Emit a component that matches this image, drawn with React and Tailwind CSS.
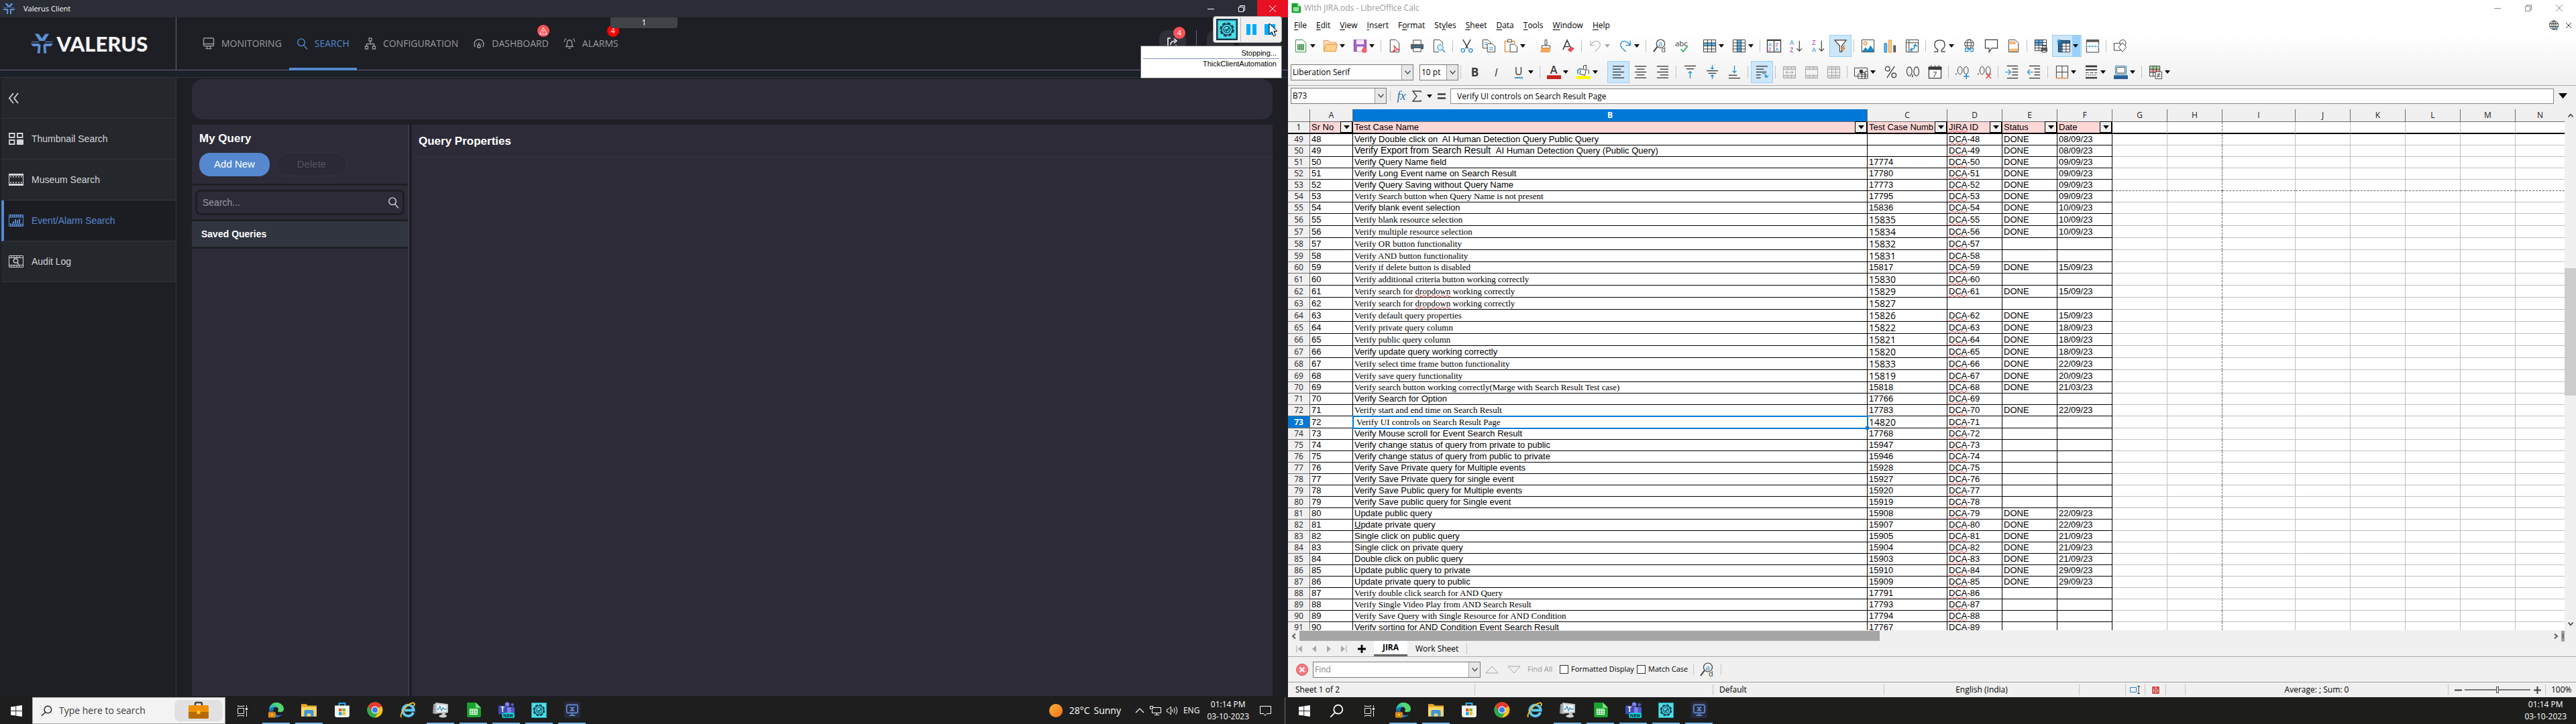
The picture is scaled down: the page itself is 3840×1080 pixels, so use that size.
import React from "react";

const UI = "font-['Open_Sans','Noto_Sans',sans-serif]";
const SANS = "font-['Liberation_Sans',sans-serif]";

/* ---------- shared pieces ---------- */

function Svg({ w = 22, h = w, vb = "0 0 22 22", className = "", children }) {
  return (
    <svg width={w} height={h} viewBox={vb} fill="none" className={"shrink-0 overflow-visible " + className} aria-hidden="true">
      {children}
    </svg>
  );
}

function ValerusMark({ w, h, color = "#5b8fd6" }) {
  return (
    <Svg w={w} h={h} vb="0 0 34 30">
      <g fill={color}>
        <path d="M6 0h6l5 7 5-7h6l-7 11h-8z" />
        <path d="M10 30h4l1-13-3-2H0l3 4h8z" />
        <path d="M24 30h-4l-1-13 3-2h12l-3 4h-8z" />
        <path d="M0 12h12l1 1H2zM34 12H22l-1 1h11z" />
      </g>
    </Svg>
  );
}

function Magnifier({ size = 18, color = "currentColor", flip = false, sw = 1.5 }) {
  return (
    <Svg w={size} vb="0 0 18 18">
      <g stroke={color} strokeWidth={sw} strokeLinecap="round">
        {flip ? (
          <>
            <circle cx="11" cy="7" r="5.6" />
            <path d="M7 11 1.5 16.5" />
          </>
        ) : (
          <>
            <circle cx="7.5" cy="6.5" r="5.6" />
            <path d="M11.3 11 16.5 17" />
          </>
        )}
      </g>
    </Svg>
  );
}

function WindowButtons({ stroke, closeClass, className, item }) {
  return (
    <div className={"flex " + className}>
      <button aria-label="Minimise" className={"flex w-[46px] items-center justify-center " + item}>
        <Svg w={10} vb="0 0 10 10"><path d="M0 5.5h10" stroke={stroke} /></Svg>
      </button>
      <button aria-label="Restore" className={"flex w-[46px] items-center justify-center " + item}>
        <Svg w={10} vb="0 0 10 10"><path d="M.5 2.5h7v7h-7zM2.5 2.500v-2h7v7h-2" stroke={stroke} /></Svg>
      </button>
      <button aria-label="Close" className={"flex w-[46px] items-center justify-center " + item + " " + closeClass}>
        <Svg w={10} vb="0 0 10 10"><path d="m0 0 10 10M10 0 0 10" stroke={stroke} /></Svg>
      </button>
    </div>
  );
}

/* ---------- taskbar ---------- */

const GearCheck = ({ size = 22 }) => (
  <Svg w={size}>
    <rect x=".5" y=".5" width="21" height="21" fill="#4fe0e8" stroke="#2a9fa8" />
    <circle cx="11" cy="11" r="7.500" stroke="#12435a" strokeWidth="2" strokeDasharray="4 1.900" />
    <circle cx="11" cy="11" r="6.300" stroke="#12435a" strokeWidth="1.200" />
    <circle cx="11" cy="11" r="3.800" stroke="#12435a" strokeWidth="1" />
    <path d="m9 11 1.600 1.700L14 8.500" stroke="#12435a" strokeWidth="1.500" />
  </Svg>
);

const Briefcase = ({ w, h }) => (
  <Svg w={w} h={h} vb="0 0 30 26">
    <path d="M10 6V3q0-2 2-2h6q2 0 2 2v3" stroke="#45413c" strokeWidth="2.500" />
    <rect y="5" width="30" height="20" rx="2" fill="#f29100" />
    <path d="M0 15h30v8q0 2-2 2H2q-2 0-2-2z" fill="#b86a08" />
    <rect x="12.500" y="13" width="5" height="5" rx="1" fill="#ffd21f" />
  </Svg>
);

const EdgeIcon = () => (
  <Svg w={24}>
    <path d="M1 12C1 5 5.500 1 11 1s10 4 10 8.500c0 3-2 4.500-4.500 4.500-2 0-3.500-.7-3.500-1.600 0-.6.8-.9.8-2.300C13.800 8.500 12 7 9.500 7 5 7 1 9 1 12z" fill="#35c1b1" />
    <path d="M11 1c5.500 0 10 4 10 8.500 0 3-2 4.500-4.500 4.500-2 0-3.500-.7-3.500-1.600 0-.6.8-.9.800-2.300C13.800 6 9 4 5 3.500 6.700 1.900 8.800 1 11 1z" fill="#52d66a" />
    <path d="M1 12c0-3 4-5 8.500-5C7 8 6.500 11 7.500 14c1.200 3.500 6 5.500 11 3.500-1.500 2.300-4 3.500-7.500 3.500C5 21 1 17 1 12z" fill="#1677c9" />
    <rect x="0" y="14" width="10" height="7.500" rx="1" fill="#e08a12" />
    <path d="M3 14v-1.500h4V14" stroke="#5b3a10" />
    <rect x="4" y="16.500" width="2" height="2" fill="#ffe066" />
  </Svg>
);
const FolderIcon = () => (
  <Svg w={24}>
    <path d="M0 3h7l2 2h12v13H0z" fill="#e8a91c" />
    <path d="M0 7h21v13H0z" fill="#ffd666" />
    <path d="M4 20v-7q0-2 2-2h9q2 0 2 2v7h-4v-4H8v4z" fill="#3d96d8" />
  </Svg>
);
const StoreIcon = () => (
  <Svg w={24}>
    <path d="M7 6V2h8v4" stroke="#28a8ea" strokeWidth="2" />
    <path d="M1 5h20v13q0 3-3 3H4q-3 0-3-3z" fill="#f4f4f4" />
    <path d="M6.500 9h4v4h-4z" fill="#f25022" />
    <path d="M11.500 9h4v4h-4z" fill="#7fba00" />
    <path d="M6.500 14h4v4h-4z" fill="#00a4ef" />
    <path d="M11.500 14h4v4h-4z" fill="#ffb900" />
  </Svg>
);
const ChromeIcon = () => (
  <Svg w={24}>
    <circle cx="11" cy="11" r="10.500" fill="#fbc116" />
    <path d="M11 11 1.900 5.700A10.500 10.500 0 0 1 20.100 5.700z" fill="#e33b2e" />
    <path d="M11 11 1.900 5.700A10.500 10.500 0 0 0 11 21.500l4.500-8z" fill="#2da94f" />
    <path d="M11 6h9.200A10.500 10.500 0 0 0 2 5.800L6.500 13z" fill="#e33b2e" />
    <circle cx="11" cy="11" r="5" fill="#fff" />
    <circle cx="11" cy="11" r="4" fill="#3b7ded" />
  </Svg>
);
const IeIcon = () => (
  <Svg w={24}>
    <path d="M18.500 14.500A7.500 7.500 0 1 1 19 11.500H6.500" stroke="#5cc8f2" strokeWidth="3.600" />
    <path d="M2 21C-1 17 10 3 17 1.500c4-.8 3.500 2.500 2 4.500" stroke="#f5c518" strokeWidth="1.700" />
  </Svg>
);
const MonitorIcon = () => (
  <Svg w={24}>
    <path d="m1 3 4-1v15l-5-1.500z" fill="#9a9ea2" />
    <path d="M13 14h4l1 5h-6z" fill="#b5b8ba" />
    <ellipse cx="14" cy="19.500" rx="5.500" ry="2" fill="#cfd1d2" />
    <path d="m4 1 17 2v12L4 16z" fill="#c9ccce" />
    <path d="m6 3.500 13 1.300v8.500L6 13.800z" fill="#eaf5fc" />
    <path d="M6 10h2l2-4 2 6 2-4 1.500 2H19" stroke="#2b7fb8" />
  </Svg>
);
const CalcIcon = ({ size = 24 }) => (
  <Svg w={size}>
    <path d="M2 1h12l7 7v11q0 2-2 2H4q-2 0-2-2z" fill="#18a42e" />
    <path d="M14 1v7h7z" fill="#8be28f" />
    <path d="M6 10h10v7H6zM6 12.300h10M6 14.700h10M9.300 10v7M12.700 10v7" stroke="#eafbe9" strokeWidth="1.100" />
  </Svg>
);
const TeamsIcon = () => (
  <Svg w={24}>
    <circle cx="12" cy="3.500" r="3" fill="#7b83eb" />
    <circle cx="19" cy="4" r="2.200" fill="#5059c9" />
    <path d="M13 7h9v7q0 3-4 3h-5z" fill="#5059c9" />
    <path d="M6 7h11v8q0 5-5 5T6 15z" fill="#7b83eb" />
    <rect x="0" y="5" width="12" height="12" rx="1" fill="#4048b5" />
    <text x="3" y="14" fontSize="9" fontWeight="700" fill="#fff" fontFamily="Open Sans, sans-serif">T</text>
    <rect x="5" y="15" width="17" height="7" rx="1.500" fill="#12d6dc" />
    <text x="6.500" y="21" fontSize="6" fontWeight="700" fill="#00242a" fontFamily="Open Sans, sans-serif">NEW</text>
  </Svg>
);
const ClientIcon = () => (
  <Svg w={24}>
    <rect width="22" height="22" rx="3" fill="#2b2a3d" />
    <rect x="3.500" y="4" width="15" height="11" rx="2" stroke="#5b8fd6" strokeWidth="1.500" />
    <path d="M11 15v3M7 18.500h8" stroke="#5b8fd6" strokeWidth="1.500" />
    <path d="m8 7 3 2.500L14 7M8 12.500l3-2.500 3 2.500M11 7v6" stroke="#5b8fd6" strokeWidth="1.300" />
  </Svg>
);

const APPS = [
  ["Microsoft Edge", EdgeIcon, true],
  ["File Explorer", FolderIcon, true],
  ["Microsoft Store", StoreIcon, false],
  ["Google Chrome", ChromeIcon, false],
  ["Internet Explorer", IeIcon, false],
  ["Resource Monitor", MonitorIcon, true],
  ["LibreOffice Calc", CalcIcon, true],
  ["Microsoft Teams", TeamsIcon, true],
  ["TestComplete", () => <GearCheck size={23} />, true],
  ["Valerus Client", ClientIcon, true],
];

const StartIcon = () => (
  <Svg w={17} vb="0 0 17 17">
    <path d="M0 2.400 7.300 1.400V8H0zM8.200 1.300 17 0v8H8.200zM0 9h7.300v6.600L0 14.600zM8.200 9H17v8l-8.800-1.300z" fill="#fff" />
  </Svg>
);
const TaskViewIcon = () => (
  <Svg w={17} vb="0 0 17 17">
    <path d="M1.500 4.500h9v8h-9zM1.500 0v1.500h9V0M1.500 17v-1.500h9V17M14.500 0v3M14.500 8v9" stroke="#e8e8e8" />
    <path d="M13 4h3v3h-3z" fill="#e8e8e8" />
  </Svg>
);

function AppButtons() {
  return APPS.map(([name, Icon, open]) => (
    <button
      key={name}
      aria-label={name}
      className={
        "mx-1 flex h-10 w-[41px] items-center justify-center border-b-2 " +
        (open ? "border-[#76b9ed]" : "border-transparent")
      }
    >
      <Icon />
    </button>
  ));
}

function Clock() {
  return (
    <div className="flex flex-col items-center text-xs leading-[18px] text-white">
      <time>01:14 PM</time>
      <time>03-10-2023</time>
    </div>
  );
}

/* ---------- Valerus client ---------- */

const navIcon = {
  monitoring: (
    <Svg w={18} vb="0 0 18 18">
      <rect x="1.500" y=".7" width="15" height="12" rx="2" stroke="currentColor" strokeWidth="1.400" />
      <path d="M2 9.500h14M6.500 13v3.500M11.500 13v3.500M4.500 16.700h9" stroke="currentColor" strokeWidth="1.300" />
    </Svg>
  ),
  search: <Magnifier size={17} />,
  configuration: (
    <Svg w={18} vb="0 0 18 18">
      <path d="M7 1h4v4H7zM1.500 13h4v4h-4zM12.500 13h4v4h-4zM9 5v4M3.500 13V9.500h11V13" stroke="currentColor" strokeWidth="1.300" />
    </Svg>
  ),
  dashboard: (
    <Svg w={18} vb="0 0 18 18">
      <path d="M3.500 14A7 7 0 1 1 14.500 14" stroke="currentColor" strokeWidth="1.500" />
      <path d="M9 7v5M5 9l1 .7M13 9l-1 .7" stroke="currentColor" strokeWidth="1.300" />
      <circle cx="9" cy="13" r="2.200" stroke="currentColor" strokeWidth="1.500" />
    </Svg>
  ),
  alarms: (
    <Svg w={18} vb="0 0 18 18">
      <path d="M4 13.500q1.500-1.500 1.500-6Q5.500 4 9 4t3.500 3.500q0 4.500 1.500 6zM9 2.500V4M7.500 16h3" stroke="currentColor" strokeWidth="1.300" />
      <path d="M4 1.500Q1.500 3 1.200 6.500M14 1.500q2.500 1.500 2.800 5" stroke="currentColor" strokeWidth="1.300" />
    </Svg>
  ),
};

const NAV = [
  ["MONITORING", navIcon.monitoring],
  ["SEARCH", navIcon.search, true],
  ["CONFIGURATION", navIcon.configuration],
  ["DASHBOARD", navIcon.dashboard, false, "warn"],
  ["ALARMS", navIcon.alarms, false, "4"],
];

const SIDE = [
  [
    "Thumbnail Search",
    <Svg w={22} h={18} vb="0 0 22 18">
      <path d="M1 1h7.500v6H1zM13 1h7.500v6H13zM1 11h7.500v6H1z" stroke="currentColor" strokeWidth="1.800" />
      <rect x="12" y="10" width="10" height="8" rx="1" fill="currentColor" />
    </Svg>,
  ],
  [
    "Museum Search",
    <Svg w={22} h={18} vb="0 0 22 18">
      <path d="M.5.5h21v17H.5z" stroke="currentColor" />
      <path d="M0 1.500h22M0 16.500h22" stroke="currentColor" strokeWidth="3" />
      <path d="M2 4.700h19M2 13.300h19" stroke="currentColor" strokeWidth="1.600" strokeDasharray="2 2" />
    </Svg>,
  ],
  [
    "Event/Alarm Search",
    <Svg w={22} h={18} vb="0 0 22 18">
      <path d="M.5.500h21v17H.5zM0 4h22M0 14h22" stroke="currentColor" />
      <path d="M2 2.200h19M2 15.800h19" stroke="currentColor" strokeWidth="3" strokeDasharray="2 1" />
      <path d="M7 13v-3M10 13V7M13 13V8.500M16 13V6.500" stroke="currentColor" strokeWidth="2" />
    </Svg>,
    true,
  ],
  [
    "Audit Log",
    <Svg w={22} h={18} vb="0 0 22 18">
      <path d="M.5.500h21v17H.5zM0 3.500h22M0 14.500h22" stroke="currentColor" />
      <path d="M4 0v3M8 0v3M12 0v3M16 0v3M4 15v3M8 15v3M12 15v3M16 15v3" stroke="currentColor" />
      <circle cx="10.500" cy="8" r="3.200" stroke="currentColor" strokeWidth="1.300" />
      <path d="m12.500 10.500 2.500 3" stroke="currentColor" strokeWidth="1.300" />
    </Svg>,
  ],
];

function ValerusWindow() {
  return (
    <section className="relative flex min-h-0 flex-1 flex-col bg-[#1e1f24]">
      <div className="flex h-[26px] items-center bg-[#2a2d35] pl-1">
        <ValerusMark w={19} h={16} />
        <span className="ml-3 text-[11px] text-white">Valerus Client</span>
        <WindowButtons stroke="#fff" className="ml-auto" item="h-[26px]" closeClass="bg-[#e81123]" />
      </div>

      <header className="flex h-[79px] border-b border-[#6a5c84]">
        <div className="flex w-[263px] items-center justify-center gap-[6px] border-r border-[#6a5c84] pl-1">
          <ValerusMark w={33} h={30} />
          <span className="font-['Lato','Open_Sans',sans-serif] text-[31px] font-black text-[#f4f4f6]">VALERUS</span>
        </div>
        <nav className="ml-7 flex">
          {NAV.map(([label, icon, active, badge]) => (
            <a
              key={label}
              href="#"
              className={
                "relative -mb-px flex items-center gap-[10px] border-b-4 px-[11px] pt-[3px] text-sm " +
                (active ? "border-[#5588cf] text-[#5588cf]" : "border-transparent text-[#9a9ba0]")
              }
            >
              {icon}
              {label}
              {badge && (
                <span
                  className={
                    "absolute right-[10px] top-[11px] flex size-[18px] items-center justify-center rounded-full text-[11px] text-white " +
                    (badge === "warn" ? "bg-[#ff5257]" : "bg-[#ff0000]")
                  }
                >
                  {badge === "warn" ? (
                    <Svg w={12} vb="0 0 12 12"><path d="M6 1 11.300 11H.7zM6 4.500v3.200M6 8.700v1" stroke="#fff" /></Svg>
                  ) : (
                    badge
                  )}
                </span>
              )}
            </a>
          ))}
        </nav>
        <div className="ml-auto mr-[11px] flex items-start pt-[19px]">
          <button aria-label="Export" className="relative flex h-10 w-10 items-start justify-center rounded-xl bg-[#303138] pt-[10px]">
            <Svg w={18} vb="0 0 18 18">
              <path d="M6 2H2v14h12v-4M6 12q0-6 7-6M11 2.500 15 6l-4 3.500" stroke="#fff" strokeWidth="1.500" />
            </Svg>
            <span className="absolute -top-[5px] right-px flex size-[18px] items-center justify-center rounded-full bg-[#ff5257] text-[11px] text-white">4</span>
          </button>
          <div className="mx-[15px] h-10 w-px bg-[#6a5c84]" />
          <button aria-label="Settings" className="h-10 w-10 rounded-xl bg-[#303138]" />
          <button aria-label="Profile" className="ml-2 h-10 w-[62px] rounded-xl bg-[#303138]" />
        </div>
      </header>

      <span className="absolute left-[910px] top-[26px] flex h-4 w-[100px] items-center justify-center rounded-b bg-[#424347] text-xs text-white">1</span>

      <div className="h-[10px] bg-[#1a2128]" />

      <div className="flex min-h-0 flex-1 border-t border-[#34353c]">
        <aside className="ml-[2px] w-[261px] border-r border-[#34363d]">
          <button aria-label="Collapse menu" className="flex h-[61px] w-full items-center border-b border-[#34363d] bg-[#24272c] pl-[10px] text-[#d4d5d8]">
            <Svg w={17} vb="0 0 17 17"><path d="M8 1 2 8.500 8 16M15 1 9 8.500l6 7.500" stroke="currentColor" strokeWidth="1.800" /></Svg>
          </button>
          {SIDE.map(([label, icon, active]) => (
            <a
              key={label}
              href="#"
              className={
                "flex h-[61px] items-center gap-3 border-b border-b-[#34363d] text-sm " +
                SANS +
                (active ? " border-l-4 border-l-[#5588cf] bg-[#1c1d23] pl-[7px] text-[#5588cf]" : " bg-[#24272c] pl-[11px] text-[#d4d5d8]")
              }
            >
              {icon}
              {label}
            </a>
          ))}
        </aside>

        <main className={"ml-[23px] mr-[23px] flex min-w-0 flex-1 flex-col pb-[2px] pt-[2px] " + SANS}>
          <div className="h-[60px] rounded-2xl bg-[#2d2b38]" />
          <div className="mt-2 flex min-h-0 flex-1">
            <div className="flex w-[324px] flex-col border-r-2 border-[#3c3c42] bg-[#2d2b38]">
              <div className="px-[11px] pb-[11px] pt-[10px]">
                <h2 className="text-[17px] font-bold leading-[22px] text-white">My Query</h2>
                <div className="mt-[10px] flex gap-[10px]">
                  <button className="h-[35px] w-[105px] rounded-2xl bg-[#5588cf] text-[15px] text-white">Add New</button>
                  <button disabled className="h-[35px] w-[105px] rounded-2xl border border-[#34333f] bg-[#2a2934] text-[15px] text-[#55545f]">Delete</button>
                </div>
              </div>
              <div className="border-y-[3px] border-[#1e1f24] px-[5px] py-[6px]">
                <label className="flex h-[38px] items-center rounded-lg border-[3px] border-[#1e1f24] pl-2 pr-[5px]">
                  <input aria-label="Search queries" placeholder="Search..." className="min-w-0 flex-1 bg-transparent text-sm placeholder-[#9a9aa3] outline-none" />
                  <span className="text-[#d4d5d8]"><Magnifier size={17} /></span>
                </label>
              </div>
              <h3 className="flex h-[41px] items-center border-b-[3px] border-[#1e1f24] bg-[#30353f] pl-[14px] text-sm font-bold text-white">Saved Queries</h3>
            </div>
            <div className="ml-1 flex-1 bg-[#2d2b38]">
              <h2 className="h-[49px] border-b border-[#353442] pl-[10px] pt-[13px] text-[17px] font-bold leading-[24px] text-white">Query Properties</h2>
            </div>
          </div>
        </main>
      </div>

      {/* recorder toolbar and its status bubble */}
      <div className="absolute right-[9px] top-6 flex h-10 w-[103px] items-center rounded-sm border border-[#a3a09c] bg-[#f0f0f0] pl-1 shadow">
        <span className="border-2 border-[#16364a]"><GearCheck size={28} /></span>
        <span className="mx-1 h-9 w-px bg-[#b5b5b5]" />
        <button aria-label="Pause" className="ml-1 flex gap-[3px]">
          <span className="h-4 w-[6px] bg-[#00aaff]" />
          <span className="h-4 w-[6px] bg-[#00aaff]" />
        </button>
        <button aria-label="Stop" className="ml-3 size-4 bg-[#00aaff]" />
      </div>
      <div className={"absolute right-[9px] top-[68px] h-[49px] w-[211px] border border-[#6b6b6b] bg-white px-[3px] pt-1 text-right text-[11px] leading-[13px] text-black " + SANS}>
        <div className="border-b border-[#8496b8] px-1 pb-px">Stopping...</div>
        <div className="px-1 pt-px">ThickClientAutomation</div>
      </div>
      <Svg w={14} h={22} vb="0 0 14 22" className="absolute right-[15px] top-[34px]">
        <path d="M1 1v16l4-3.500L7.500 20l3-1.200L8 12.500h5z" fill="#fff" stroke="#000" />
      </Svg>
    </section>
  );
}

function LeftTaskbar() {
  return (
    <footer className="flex h-10 items-center bg-[#1e1e1e] text-white">
      <button aria-label="Start" className="flex h-10 w-12 items-center justify-center"><StartIcon /></button>
      <label className="flex h-10 w-[288px] items-center border border-[#a8a8a8] bg-[#f3f3f3] pl-3 pr-[3px] text-[#222]">
        <Magnifier size={17} flip />
        <input aria-label="Type here to search" placeholder="Type here to search" className="ml-[10px] w-[160px] bg-transparent text-sm placeholder-[#3a3a3a] outline-none" />
        <span className="ml-auto flex h-8 w-[72px] items-center justify-center rounded-lg bg-[#e1e1e1]"><Briefcase w={30} h={26} /></span>
      </label>
      <button aria-label="Task view" className="flex h-10 w-[51px] items-center justify-center"><TaskViewIcon /></button>
      <AppButtons />
      <div className="ml-auto flex h-10 items-center">
        <span className="size-5 rounded-full bg-gradient-to-br from-[#fbb034] to-[#f4701c]" />
        <span className="ml-[10px] text-sm">28°C</span>
        <span className="ml-[6px] text-sm">Sunny</span>
        <Svg w={12} vb="0 0 12 12" className="ml-[22px]"><path d="m0 9 6-6 6 6" stroke="#fff" strokeWidth="1.200" /></Svg>
        <Svg w={17} h={14} vb="0 0 17 14" className="ml-[9px]"><path d="M5 2.500h11.500v8H3.500V6M7 13.500h7M10.500 10.500v3M.5.500h4v4h-4z" stroke="#fff" /></Svg>
        <Svg w={17} h={14} vb="0 0 17 14" className="ml-2"><path d="M.5 5h2l4-4v12l-4-4h-2zM8.500 5q1.500 2 0 4M11 3q3 4 0 8M13.500 1q4.500 6 0 12" stroke="#fff" /></Svg>
        <span className="ml-2 mr-[11px] text-xs">ENG</span>
        <Clock />
        <Svg w={17} vb="0 0 17 17" className="ml-4"><path d="M.5 1.500h16v11h-6l-2.500 3-2.500-3h-5z" stroke="#fff" /></Svg>
        <span className="ml-5 mr-1 h-10 w-px bg-[#6d6d6d]" />
      </div>
    </footer>
  );
}

/* ---------- Calc icons ---------- */

const D = "#3a3a38";
const B = "#1e8bcd";
const O = "#ed8733";
const T = ({ x, y, s = 10, c = D, children, ...r }) => (
  <text x={x} y={y} fontSize={s} fill={c} fontFamily="Open Sans, sans-serif" {...r}>{children}</text>
);
const grid = (x, y, w, h) => (
  <path d={`M${x} ${y}h${w}v${h}h-${w}zM${x} ${y + h / 4}h${w}M${x} ${y + h / 2}h${w}M${x} ${y + (3 * h) / 4}h${w}M${x + w / 3} ${y}v${h}M${x + (2 * w) / 3} ${y}v${h}`} stroke={D} />
);
const lines = (arr) => arr.map(([x1, x2, y]) => <path key={y} d={`M${x1} ${y}H${x2}`} stroke={D} strokeWidth="1.400" />);

const IC = {
  new: <><path d="M2.500 1.500h11l5 5v14h-16z" fill="#fff" stroke="#2e8b3c" /><path d="M6 9h9v8H6zM6 11.700h9M6 14.300h9M9 9v8M12 9v8" stroke="#2e8b3c" strokeWidth="1.300" /></>,
  open: <><path d="M.5 19V2.500h7l2 3h10V9" fill="#fbe3c4" stroke={O} /><path d="M4 8.500h17.500l-2.500 11H.5z" fill="#fad38a" stroke={O} /></>,
  save: <><path d="M1.500 1.500h19v18h-19z" fill="#a95fc0" stroke="#8a3fa5" /><path d="M5 1.500h12v7H5z" fill="#f6eafa" /><path d="M6 12h10v7.500H6z" fill="#fff" /><circle cx="17.500" cy="18" r="4" fill="#f4646a" /></>,
  pdf: <><path d="M3.500 1.500h9l5 5v14h-14z" fill="#fff" stroke={D} /><path d="M9 10q2 5 9 7-6-1-11 4 4-4 4-10" stroke="#e0333a" strokeWidth="1.300" /></>,
  print: <><path d="M5 8V2h12v6" fill="#fff" stroke={D} /><rect x="1" y="8" width="20" height="8" rx="1" fill="#5b5b59" /><path d="M5 14h12v6H5z" fill="#fff" stroke={D} /><path d="M4 12h14" stroke={B} strokeWidth="1.500" /></>,
  preview: <><path d="M16.500 9V6l-5-4.500h-9v19h8" fill="#fff" stroke={D} /><circle cx="12.500" cy="13.500" r="4.500" fill="#d7ecfa" stroke={B} /><path d="m16 17 4 4" stroke={B} strokeWidth="1.500" /></>,
  cut: <><path d="m5 1 8 14M17 1 9 15" stroke={D} strokeWidth="1.500" /><circle cx="5" cy="18" r="2.800" stroke={B} strokeWidth="1.300" /><circle cx="17" cy="18" r="2.800" stroke={B} strokeWidth="1.300" /></>,
  copy: <><path d="M1.500 1.500h8l4 4v9h-12z" fill="#fff" stroke={D} /><path d="M8.500 7.500h8l4 4v9h-12z" fill="#fff" stroke={D} /><path d="M11 14h7M11 17h7M4 6h4M4 9h4" stroke={B} /></>,
  paste: <><path d="M8 20H1.500V3.500h15V7" stroke={O} strokeWidth="1.400" /><path d="M6 1h6v4H6z" fill="#fff" stroke={D} /><path d="M9.500 8.500h7l4 4v8h-11z" fill="#fff" stroke={D} /></>,
  brush: <><path d="M9.500 1.500h3v8h-3z" fill="#fff" stroke={D} /><path d="M4.500 10.500h13v4h-13z" fill="#fff" stroke={D} /><path d="M4.500 14.500h13l-1 6H3z" fill="#f6a95f" stroke={O} /></>,
  clear: <><path d="M3 17 9.500 2 15 14M5.500 12h7" stroke={D} strokeWidth="1.700" /><path d="m10 17 6-5 5 3-6 6z" fill="#f04b54" /></>,
  undo: <><path d="M3 3v7h7M3.500 9.500Q9 2 15 4q6 3.500 1 10l-6 6" stroke="#bdbdbd" strokeWidth="1.400" /></>,
  redo: <><path d="M19 3v7h-7M18.500 9.500Q13 2 7 4q-6 3.500-1 10l6 6" stroke={B} strokeWidth="1.400" /></>,
  find: <><circle cx="12" cy="7.500" r="6.500" stroke={D} strokeWidth="1.200" /><path d="m7 12-6 8" stroke={D} strokeWidth="2" /><T x="8.500" y="11.500" s="11" c={B}>a</T><T x="13" y="21" s="11">d</T></>,
  spell: <><T x="0" y="11" s="12">abc</T><path d="m9 16 3.500 4L20 11" stroke="#2eb455" strokeWidth="1.800" /></>,
  row: <><path d="M1 6h20v5H1z" fill="#5ab0ea" />{grid(1.500, 1.500, 19, 19)}</>,
  col: <><path d="M7.500 1h7v20h-7z" fill="#5ab0ea" />{grid(1.500, 1.500, 19, 19)}</>,
  sort: <><path d="M.5 1.500h21v19H.5zM0 2.500h22M11 2v19" stroke={D} strokeWidth="1.300" /><T x="2" y="11" s="8" c={B}>A</T><T x="2" y="19" s="8" c="#a02fa8">Z</T><T x="13" y="11" s="8" c="#a02fa8">Z</T><T x="13" y="19" s="8" c={B}>A</T></>,
  az: <><T x="1" y="9" s="10" c={B}>A</T><T x="1" y="21" s="10" c="#a02fa8">Z</T><path d="M16 3v16m-4-4 4 4 4-4" stroke={D} strokeWidth="1.200" /></>,
  za: <><T x="1" y="9" s="10" c="#a02fa8">Z</T><T x="1" y="21" s="10" c={B}>A</T><path d="M16 3v16m-4-4 4 4 4-4" stroke={D} strokeWidth="1.200" /></>,
  filter: <><path d="M2 2h18l-7 9v9h-3v-9z" fill="#fff" stroke={D} strokeWidth="1.200" /><path d="m16 10-4 6h3l-2 6 6-8h-3l2-4z" fill={O} /></>,
  image: <><path d="M1.500 1.500h19v19h-19z" fill="#fff" stroke={D} /><circle cx="7" cy="7" r="2.500" fill="#fff" stroke={O} strokeWidth="1.300" /><path d="m2 20 5-7 4 4 4-7 5 7v3z" fill={B} /></>,
  chart: <><path d="M2 7h4v14H2z" fill="#5ab0ea" stroke={B} /><path d="M9 2h4v19H9z" fill="#fad38a" stroke={O} /><path d="M16 10h4v11h-4z" fill="#5b5b59" /></>,
  pivot: <><path d="M1.500 1.500h19v19h-19zM1.500 6h19M6 1.500v19" stroke={D} /><path d="M8 17q7 0 8-8m-3 3 3-3.500 3 3.500M11 14l-3 3 3 3" stroke={B} strokeWidth="1.400" /></>,
  omega: <path d="M2 20h6v-3q-5-3-5-8 0-7 8-7t8 7q0 5-5 8v3h6" stroke={D} strokeWidth="1.400" />,
  link: <><circle cx="11" cy="8" r="7" stroke={D} /><ellipse cx="11" cy="8" rx="3" ry="7" stroke={D} /><path d="M4 6h14M4 10.500h14" stroke={D} /><path d="M10 14.500H5v5h5M12 14.500h5v5h-5M8 17h6" stroke={B} strokeWidth="1.400" /></>,
  comment: <path d="M1.500 1.500h19v13h-9l-4 6v-6h-6z" fill="#fff" stroke={D} strokeWidth="1.200" />,
  header: <><path d="M3.500 1.500h10l5 5v14h-15z" fill="#fff" stroke={D} /><path d="M5.500 4.500h8v3h-8zM5.500 16h11v3h-11z" fill="#fad38a" stroke={O} /></>,
  printarea: <><path d="M1 1h13v9H1z" fill="#5ab0ea" />{grid(1.500, 1.500, 18, 17)}<path d="M11 14h10v6H11z" fill="#5b5b59" /><path d="M13 11h6v3h-6zM13 18h6v3h-6z" fill="#fff" stroke={D} /></>,
  freeze: <><path d="M2 2h19v19H2z" fill="#fff" /><path d="M4 2h17v5H4zM2 2h6v19H2z" fill="#1e6fb8" />{grid(2.500, 2.500, 18, 18)}<path d="M4 0v8M0 4h8M1 1l6 6M7 1 1 7" stroke={B} /></>,
  split: <><path d="M1.500 1.500h19v8M1.500 1.500v8M1.500 13v8h19v-8" stroke={D} /><path d="M1 2h20v3H1z" fill="#5b5b59" /><path d="M0 11.500h22" stroke={B} strokeWidth="1.500" strokeDasharray="3 1.500" /></>,
  shapes: <><circle cx="15" cy="6.500" r="5" fill="#fff" stroke={D} /><path d="M1.500 7h10v11h-10z" fill="#fff" stroke={D} /><path d="m14.500 6 6 7-6 7-6-7z" fill="#fff" stroke={D} /></>,
  bold: <T x="5" y="18" s="18" fontWeight="700">B</T>,
  italic: <T x="7" y="18" s="18" fontStyle="italic">I</T>,
  underline: <><T x="4" y="16" s="17">U</T><path d="M4 20h13" stroke={B} strokeWidth="1.800" /></>,
  fontcolor: <><T x="5" y="14" s="17" fontWeight="600">A</T><path d="M0 16h22v6H0z" fill="#c9211e" /></>,
  fill: <><path d="m7 6 8 2-2 8-8-2z" fill="#fff" stroke={D} /><path d="M11 6V1l4-1v8" stroke={D} /><path d="M2 14V8l4-3" stroke={B} strokeWidth="1.600" /><path d="M17 6q4 3 2 8" stroke={D} /><path d="M0 17h22v5H0z" fill="#ffff00" /></>,
  left: lines([[2, 20, 2], [2, 15, 6.500], [2, 20, 11], [2, 15, 15.500], [2, 20, 20]]),
  center: lines([[2, 20, 2], [5, 17, 6.500], [2, 20, 11], [5, 17, 15.500], [2, 20, 20]]),
  right: lines([[2, 20, 2], [7, 20, 6.500], [2, 20, 11], [7, 20, 15.500], [2, 20, 20]]),
  top: <>{lines([[2, 20, 1.500], [5, 17, 6]])}<path d="M11 21V10m-3 3 3-3 3 3" stroke={B} strokeWidth="1.300" /></>,
  middle: <>{lines([[2, 20, 9], [5, 17, 13]])}<path d="M11 0v6M8.500 4 11 6.500 13.500 4M11 22v-6m-2.500 2 2.500-2.500 2.500 2.500" stroke={B} strokeWidth="1.300" /></>,
  bottom: <>{lines([[2, 15, 16], [2, 20, 20.500]])}<path d="M11 1v11m-3-3 3 3 3-3" stroke={B} strokeWidth="1.300" /></>,
  wrap: <>{lines([[2, 20, 2], [2, 14, 6.500], [2, 18, 11], [2, 9, 15.500], [2, 9, 20]])}<path d="M12 13q6 0 6 6m-3-2.500 3 3 3-3" stroke={B} strokeWidth="1.300" /></>,
  merge: <><path d="M1 2h20v4.500H1zM1 16h20v4.500H1z" fill="#d8d8d8" /><path d="M1.500 2.500h19v18h-19zM1.500 7h19M1.500 16h19M8 2.500V7M14 2.500V7M8 16v4.500M14 16v4.500M5 11.500h12m-9-2-3 2 3 2m6-4 3 2-3 2" stroke="#a5a5a5" /></>,
  mergeC: <><path d="M1 2h20v4.500H1zM1 16h20v4.500H1z" fill="#d8d8d8" /><path d="M1.500 2.500h19v18h-19zM1.500 7h19M1.500 16h19M8 2.500V7M14 2.500V7M8 16v4.500M14 16v4.500" stroke="#a5a5a5" /></>,
  unmerge: <><path d="M1 2h20v4.500H1zM1 16h20v4.500H1z" fill="#d8d8d8" /><path d="M1.500 2.500h19v18h-19zM1.500 7h19M1.500 16h19M8 2.500v18M14 2.500v18M1.500 11.500h19" stroke="#a5a5a5" /></>,
  currency: <><path d="M20.500 10V4.500H.5v13h6" stroke={D} /><circle cx="11" cy="10" r="3" fill={D} /><path d="M6 14h6v7H6zM12 12h5v9h-5zM17 10h4v11h-4z" fill="#fff" stroke={D} /><path d="M6 17.500h15M12 14.500h9" stroke={D} /></>,
  percent: <><circle cx="6" cy="6" r="3.500" stroke={D} strokeWidth="1.300" /><circle cx="16" cy="16" r="3.500" stroke={D} strokeWidth="1.300" /><path d="M17 2 5 20" stroke={D} strokeWidth="1.300" /></>,
  number: <><ellipse cx="5.500" cy="10" rx="4" ry="7" stroke={D} strokeWidth="1.200" /><ellipse cx="16.500" cy="10" rx="4" ry="7" stroke={D} strokeWidth="1.200" /><path d="m11 15-1 4" stroke={D} strokeWidth="1.500" /></>,
  date: <><path d="M1.500 4.500h19v16h-19z" fill="#fff" stroke={D} strokeWidth="1.300" /><path d="M1 3h20v4H1zM5 0v4M11 0v4M17 0v4" fill={D} stroke={D} /><T x="7" y="18.500" s="12">7</T></>,
  adddec: <><ellipse cx="7" cy="8.500" rx="3.500" ry="6" stroke={D} /><ellipse cx="16.500" cy="8.500" rx="3.500" ry="6" stroke={D} /><path d="M1 13v2" stroke={D} strokeWidth="1.600" /><path d="M17 13v9M12.500 17.500h9" stroke={B} strokeWidth="1.500" /></>,
  deldec: <><ellipse cx="7" cy="8.500" rx="3.500" ry="6" stroke={D} /><ellipse cx="16.500" cy="8.500" rx="3.500" ry="6" stroke={D} /><path d="M1 13v2" stroke={D} strokeWidth="1.600" /><path d="m13 13 8 8M21 13l-8 8" stroke="#ed3d3b" strokeWidth="1.500" /></>,
  indent: <>{lines([[3, 20, 1.500], [11, 20, 6], [11, 20, 11], [11, 20, 15.500], [3, 20, 20.500]])}<path d="M0 11h8m-3-4 3.500 4L5 15" stroke={B} strokeWidth="1.300" /></>,
  outdent: <>{lines([[3, 20, 1.500], [11, 20, 6], [11, 20, 11], [11, 20, 15.500], [3, 20, 20.500]])}<path d="M9 11H.5M4 7 .5 11 4 15" stroke={B} strokeWidth="1.300" /></>,
  border: <><path d="M2.500 21V1.500h18V21M11.500 1.500V21M2.500 11h18" stroke={D} /><path d="M2 20.500h19" stroke={O} strokeWidth="1.500" /></>,
  linestyle: <><path d="M2 2h18" stroke={D} strokeWidth="3" /><path d="M2 7.500h18" stroke={D} strokeWidth="2" /><path d="M2 12h18" stroke={D} strokeDasharray="5 2" /><path d="M2 15.500h18" stroke={D} strokeDasharray="2 1.500" /><path d="M2 20h18" stroke={D} strokeWidth="2.500" /></>,
  bordercolor: <><path d="M2.500 1.500h17v13h-17z" stroke={B} /><path d="M4.500 3.500h13v9h-13z" fill="#fff" stroke={D} /><path d="M0 16h22v6H0z" fill="#2a6099" /></>,
  cond: <><path d="M2 2h15v5H2z" fill="#9fdb9f" /><path d="M2 7h15v5H2z" fill="#f59a9a" /><path d="M1.500 1.500h16v16h-16zM1.500 6.500h16M1.500 11.500h16M7 1.500v16M12 1.500v16" stroke={D} /><path d="M10.500 10.500h10v11h-10z" fill="#fff" stroke={D} /><path d="M12.500 14.500h6M12.500 17.500h6M17 12.500l-3 7" stroke={D} /></>,
};

/* name, caret?, highlighted? ; "|" separator, "_" gap */
const BAR1 = [
  ["new", 1], ["open", 1], ["save", 1], "|", ["pdf"], ["print"], ["preview"], "|", ["cut"], ["copy"], ["paste", 1], "_",
  ["brush"], ["clear"], "|", ["undo", 2], ["redo", 1], "|", ["find"], ["spell"], "_", ["row", 1], ["col", 1], "|",
  ["sort"], ["az"], ["za"], ["filter", 0, 1], "|", ["image"], ["chart"], ["pivot"], "|", ["omega", 1], ["link"],
  ["comment"], ["header"], "|", ["printarea"], ["freeze", 1, 1], ["split"], "|", ["shapes"],
];
const BAR2 = [
  "|", ["bold"], ["italic"], ["underline", 1], "|", ["fontcolor", 1], ["fill", 1], "_", ["left", 0, 1], ["center"], ["right"], "|",
  ["top"], ["middle"], ["bottom"], "|", ["wrap", 0, 1], "|", ["merge"], ["mergeC"], ["unmerge"], "|", ["currency", 1],
  ["percent"], ["number"], ["date"], "|", ["adddec"], ["deldec"], "|", ["indent"], ["outdent"], "|", ["border", 1],
  ["linestyle", 1], ["bordercolor", 1], "|", ["cond", 1],
];

function Caret({ color = "#000", w = 8 }) {
  return <Svg w={w} h={w / 2 + 1} vb="0 0 8 5"><path d="M0 0h8L4 5z" fill={color} /></Svg>;
}
function Chevron() {
  return <Svg w={9} h={6} vb="0 0 9 6"><path d="m.5.5 4 4.500 4-4.500" stroke="#444" strokeWidth="1.200" /></Svg>;
}

function Tools({ items }) {
  return items.map((it, i) => {
    if (it === "|") return <span key={i} className="ml-[3px] mr-1 h-[19px] w-px bg-[#c3c3c3]" />;
    if (it === "_") return <span key={i} className="w-2" />;
    const [name, caret, on] = it;
    return (
      <button
        key={i}
        aria-label={name}
        className={
          "flex h-[33px] items-center justify-center border " +
          (on ? "border-[#99cff5] bg-[#cce6fa] " : "border-transparent ") +
          (caret ? "w-11" : "w-[33px]")
        }
      >
        <Svg w={21}>{IC[name]}</Svg>
        {caret ? (
          <span className={"ml-[2px] flex h-full items-center pl-[1px] " + (on ? "-mr-1 w-3 bg-[#99cffb]" : "")}>
            <Caret color={caret === 2 ? "#aaa" : "#000"} />
          </span>
        ) : null}
      </button>
    );
  });
}

/* ---------- spreadsheet ---------- */

// row, name, case number, jira id, date, flags (s = serif name, t = tall row)
const ROWS = [
  [49, "Verify Double click on  AI Human Detection Query Public Query", "", 48, "08/09/23", ""],
  [50, "", "", 49, "08/09/23", ""],
  [51, "Verify Query Name field", "17774", 50, "09/09/23", ""],
  [52, "Verify Long Event name on Search Result", "17780", 51, "09/09/23", ""],
  [53, "Verify Query Saving without Query Name", "17773", 52, "09/09/23", ""],
  [54, "Verify Search button when Query Name is not present", "17795", 53, "09/09/23", "s"],
  [55, "Verify blank event selection", "15836", 54, "10/09/23", ""],
  [56, "Verify blank resource selection", "15835", 55, "10/09/23", "st"],
  [57, "Verify multiple resource selection", "15834", 56, "10/09/23", "st"],
  [58, "Verify OR button functionality", "15832", 57, "", "st"],
  [59, "Verify AND button functionality", "15831", 58, "", "st"],
  [60, "Verify if delete button is disabled", "15817", 59, "15/09/23", "s"],
  [61, "Verify additional criteria button working correctly", "15830", 60, "", "st"],
  [62, "Verify search for ~dropdown~ working correctly", "15829", 61, "15/09/23", "st"],
  [63, "Verify search for ~dropdown~ working correctly", "15827", 0, "", "st"],
  [64, "Verify default query properties", "15826", 62, "15/09/23", "st"],
  [65, "Verify private query column", "15822", 63, "18/09/23", "st"],
  [66, "Verify public query column", "15821", 64, "18/09/23", "st"],
  [67, "Verify update query working correctly", "15820", 65, "18/09/23", "t"],
  [68, "Verify select time frame button functionality", "15833", 66, "22/09/23", "st"],
  [69, "Verify save query functionality", "15819", 67, "20/09/23", "st"],
  [70, "Verify search button working correctly(Marge with Search Result Test case)", "15818", 68, "21/03/23", "s"],
  [71, "Verify Search for Option", "17766", 69, "", ""],
  [72, "Verify start and end time on Search Result", "17783", 70, "22/09/23", "s"],
  [73, " Verify UI controls on Search Result Page", "14820", 71, "", "st"],
  [74, "Verify Mouse scroll for Event Search Result", "17768", 72, "", ""],
  [75, "Verify change status of query from private to public", "15947", 73, "", ""],
  [76, "Verify change status of query from public to private", "15946", 74, "", ""],
  [77, "Verify Save Private query for Multiple events", "15928", 75, "", ""],
  [78, "Verify Save Private query for single event", "15927", 76, "", ""],
  [79, "Verify Save Public query for Multiple events", "15920", 77, "", ""],
  [80, "Verify Save public query for Single event", "15919", 78, "", ""],
  [81, "Update public query", "15908", 79, "22/09/23", ""],
  [82, "_", "15907", 80, "22/09/23", ""],
  [83, "Single click on public query", "15905", 81, "21/09/23", ""],
  [84, "Single click on private query", "15904", 82, "21/09/23", ""],
  [85, "Double click on public query", "15903", 83, "21/09/23", ""],
  [86, "Update public query to private", "15910", 84, "29/09/23", ""],
  [87, "Update private query to public", "15909", 85, "29/09/23", ""],
  [88, "Verify double click search for AND Query", "17791", 86, "", "s"],
  [89, "Verify Single Video Play from AND Search Result", "17793", 87, "", "s"],
  [90, "Verify Save Query with Single Resource for AND Condition", "17794", 88, "", "s"],
  [91, "Verify sorting for AND Condition Event Search Result", "17767", 89, "", ""],
];

const Typo = ({ children }) => (
  <span className="underline decoration-[#ff2a2a] decoration-wavy decoration-1 underline-offset-0">{children}</span>
);

function nameText(row, text) {
  if (row === 50) return <><span className="text-sm leading-none">Verify Export from Search Result&nbsp; </span>AI Human Detection Query (Public Query)</>;
  if (row === 82) return <><u>U</u>pdate private query</>;
  const p = text.split("~");
  return p.length === 3 ? <>{p[0]}<Typo>{p[1]}</Typo>{p[2]}</> : text;
}

const FilterButton = () => (
  <button aria-label="Filter" className="absolute bottom-0 right-0 flex h-[17px] w-[18px] items-center justify-center border border-black bg-[#f0f0f0]">
    <Caret w={9} />
  </button>
);

const LETTERS = "ABCDEFGHIJKLMN".split("");
const HEADS = ["Sr No", "Test Case Name", "Test Case Numb", "JIRA ID", "Status", "Date"];

function Sheet() {
  return (
    <div className="flex min-h-0 flex-1 overflow-hidden">
      <div className="min-w-0 flex-1 overflow-hidden bg-white">
        <table className={"w-full table-fixed border-separate border-spacing-0 text-[13px] leading-4 text-black " + SANS}>
          <colgroup>
            <col className="w-[33px]" />
            <col className="w-16" />
            <col className="w-[767px]" />
            <col className="w-[119px]" />
            <col className="w-[82px]" /><col className="w-[82px]" /><col className="w-[82px]" /><col className="w-[82px]" /><col className="w-[82px]" />
            <col className="w-[109px]" />
            <col className="w-[82px]" /><col className="w-[82px]" /><col className="w-[82px]" /><col className="w-[82px]" />
            <col />
          </colgroup>
          <thead className={UI}>
            <tr>
              <th className="h-[19px] border-b border-r border-[#6e6e6e] bg-[#f0f0f0] p-0" />
              {LETTERS.map((l) => (
                <th
                  key={l}
                  scope="col"
                  className={
                    "h-[19px] border-b border-r border-[#6e6e6e] p-0 text-xs leading-[18px] last:border-r-0 " +
                    (l === "B" ? "bg-[#0078d7] font-bold text-white" : "bg-[#f0f0f0] font-normal text-[#222]")
                  }
                >
                  {l}
                </th>
              ))}
            </tr>
          </thead>
          <tbody>
            <tr>
              <th scope="row" className={"h-[18px] border-b-2 border-r border-b-black border-r-[#6e6e6e] bg-[#f0f0f0] p-0 text-xs font-normal leading-4 " + UI}>1</th>
              {HEADS.map((h) => (
                <td key={h} className="relative h-[18px] whitespace-nowrap border-b-2 border-r border-black bg-[#ffd7d7] p-0 pl-[2px]">
                  {h === "JIRA ID" ? <><Typo>JIRA</Typo> ID</> : h}
                  <FilterButton />
                </td>
              ))}
              {LETTERS.slice(6).map((l) => (
                <td key={l} className={"h-[18px] border-b-2 border-r border-b-black p-0 last:border-r-0 " + (l === "H" ? "border-r-[#666] [border-right-style:dashed]" : "border-r-[#c0c0c0]")} />
              ))}
            </tr>
            {ROWS.map(([row, name, num, jira, date, f]) => {
              const tall = f.includes("t");
              const h = tall ? "h-[18px] leading-[17px]" : "h-[17px] leading-4";
              const cell = "whitespace-pre overflow-hidden border-b border-r border-black p-0 pl-[2px] " + h;
              const sel = row === 73;
              return (
                <tr key={row}>
                  <th
                    scope="row"
                    className={
                      "border-b border-r border-[#6e6e6e] p-0 text-xs " + UI + " " + h +
                      (sel ? " bg-[#0078d7] font-bold text-white" : " bg-[#f0f0f0] font-normal text-[#222]")
                    }
                  >
                    <span className={tall ? "block leading-[17px]" : "block leading-4"}>{row}</span>
                  </th>
                  <td className={cell}>{row - 1}</td>
                  {sel ? (
                    <td className={"relative z-10 whitespace-pre border-b border-r border-[#0078d7] p-0 pl-[2px] outline-2 -outline-offset-1 outline-[#0078d7] font-['Liberation_Serif',serif] " + h}>
                      {name}
                      <span className="absolute -bottom-[3px] -right-[3px] size-[5px] bg-[#0078d7]" />
                    </td>
                  ) : (
                    <td className={cell + (f.includes("s") ? " font-['Liberation_Serif',serif]" : "")}>{nameText(row, name)}</td>
                  )}
                  <td className={cell}><span className={tall ? "block font-['Open_Sans',sans-serif] text-sm leading-[17px]" : "block"}>{num}</span></td>
                  <td className={cell}>{jira ? <><Typo>DCA</Typo>-{jira}</> : null}</td>
                  <td className={cell}>{date ? "DONE" : ""}</td>
                  <td className={cell}>{date}</td>
                  {LETTERS.slice(6).map((l) => (
                    <td
                      key={l}
                      className={
                        "border-b border-r p-0 last:border-r-0 " +
                        (row === 53 ? "border-b-[#666] [border-bottom-style:dashed] " : "border-b-[#c0c0c0] ") +
                        (l === "H" ? "border-r-[#666] [border-right-style:dashed]" : "border-r-[#c0c0c0]")
                      }
                    />
                  ))}
                </tr>
              );
            })}
          </tbody>
        </table>
      </div>
      <div className="flex w-[17px] flex-col items-center bg-[#f0f0f0] py-[6px]">
        <Svg w={8} h={6} vb="0 0 8 6"><path d="m.5 5.500 3.500-4 3.500 4" stroke="#444" strokeWidth="1.700" /></Svg>
        <div className="mt-[225px] h-[190px] w-full bg-[#cdcdcd]" />
        <Svg w={8} h={6} vb="0 0 8 6" className="mt-auto"><path d="m.5.500 3.500 4 3.500-4" stroke="#444" strokeWidth="1.700" /></Svg>
      </div>
    </div>
  );
}

const MENU = [["F", "ile"], ["E", "dit"], ["V", "iew"], ["I", "nsert"], ["F", "ormat", "o"], ["S", "tyles", "y"], ["S", "heet"], ["D", "ata"], ["T", "ools"], ["W", "indow"], ["H", "elp"]];

function MenuLabel({ m: [a, b, mid] }) {
  if (!mid) return <><u className="underline-offset-2">{a}</u>{b}</>;
  const k = b.indexOf(mid);
  return <>{a}{b.slice(0, k)}<u className="underline-offset-2">{mid}</u>{b.slice(k + 1)}</>;
}

const Sep = ({ className = "" }) => <span className={"h-4 w-px bg-[#c3c3c3] " + className} />;

function CalcWindow() {
  return (
    <section className="flex min-h-0 flex-1 flex-col bg-[#f0f0f0] text-xs text-black">
      <div className="bg-gradient-to-b from-white from-40% to-[#f0f0f0]">
        <div className="flex h-6 items-center pl-1">
          <CalcIcon size={16} />
          <span className="ml-1 text-[#999]">WIth JIRA.ods - LibreOffice Calc</span>
          <WindowButtons stroke="#888" className="ml-auto mr-[2px]" item="h-5" closeClass="" />
        </div>
        <div className="flex h-7 items-center pl-[9px]">
          <nav className="flex gap-[14px]">
            {MENU.map((m) => <button key={m[0] + m[1]}><MenuLabel m={m} /></button>)}
          </nav>
          <button aria-label="Update" className="ml-auto mr-[10px]">
            <Svg w={16} vb="0 0 16 16"><circle cx="8" cy="7.500" r="6.500" stroke={D} /><ellipse cx="8" cy="7.500" rx="3" ry="6.500" stroke={D} /><path d="M1.500 5.500h13M1.500 9.500h13M8 1v13" stroke={D} /><path d="M12 9v6m-2.500-2.500L12 15l2.500-2.500" stroke={B} /></Svg>
          </button>
          <button aria-label="Close document" className="mr-[7px]"><Svg w={8} vb="0 0 8 8"><path d="m0 0 8 8M8 0 0 8" stroke="#333" /></Svg></button>
        </div>
        <div className="flex h-[33px] items-center pl-[3px]"><Tools items={BAR1} /></div>
        <div className="mt-[6px] flex h-[37px] items-start border-b border-[#ababab] pb-[3px] pl-1">
          <div className="flex h-[33px] items-center">
            <div className="flex h-6 w-[183px] border border-[#7a7a7a] bg-white">
              <input aria-label="Font name" defaultValue="Liberation Serif" className="min-w-0 flex-1 pl-[2px] outline-none" />
              <button aria-label="Choose font" className="flex w-[17px] items-center justify-center border-l border-[#a0a0a0] bg-[#e8e8e8]"><Chevron /></button>
            </div>
            <div className="ml-[9px] flex h-6 w-[58px] border border-[#7a7a7a] bg-white">
              <input aria-label="Font size" defaultValue="10 pt" className="min-w-0 flex-1 pl-[2px] outline-none" />
              <button aria-label="Choose size" className="flex w-[17px] items-center justify-center border-l border-[#a0a0a0] bg-[#e8e8e8]"><Chevron /></button>
            </div>
            <Tools items={BAR2} />
          </div>
        </div>
      </div>

      <div className="flex h-[35px] items-center pb-[5px] pl-1">
        <div className="flex h-6 w-[143px] border border-[#7a7a7a] bg-white">
          <input aria-label="Name box" defaultValue="B73" className="min-w-0 flex-1 pl-[2px] outline-none" />
          <button aria-label="Choose range" className="flex w-[17px] items-center justify-center border-l border-[#a0a0a0] bg-[#e8e8e8]"><Chevron /></button>
        </div>
        <Sep className="ml-[5px]" />
        <button aria-label="Function wizard" className="ml-2 w-4 font-['Liberation_Serif',serif] text-lg italic leading-6 text-[#1e6fb8]">fx</button>
        <button aria-label="Sum" className="ml-2 flex items-center gap-2">
          <Svg w={14} h={17} vb="0 0 14 17"><path d="M13 3V1H1l6 7.500L1 16h12v-2" stroke={D} strokeWidth="1.300" /></Svg>
          <Caret />
        </button>
        <button aria-label="Formula" className="ml-2 mr-[7px]"><Svg w={12} h={9} vb="0 0 12 9"><path d="M0 1.500h12M0 7.500h12" stroke={D} strokeWidth="2.400" /></Svg></button>
        <input aria-label="Formula input" defaultValue=" Verify UI controls on Search Result Page" className="h-[23px] min-w-0 flex-1 border border-[#8a8a8a] bg-white pl-[6px] outline-none" />
        <button aria-label="Expand formula bar" className="mx-[7px]"><Svg w={13} h={8} vb="0 0 13 8"><path d="M0 0h13L6.500 8z" fill="#000" /></Svg></button>
        <span className="w-[6px]" />
      </div>

      <Sheet />

      <div className="mt-px flex h-[15px] items-center pl-[6px] pr-[17px]">
        <Svg w={6} h={8} vb="0 0 6 8"><path d="M5 .5 1 4l4 3.500" stroke="#555" strokeWidth="1.800" /></Svg>
        <div className="ml-[5px] h-[15px] w-[865px] bg-[#a6a6a6]" />
        <Svg w={6} h={8} vb="0 0 6 8" className="ml-auto mr-[5px]"><path d="m1 .5 4 3.500-4 3.500" stroke="#555" strokeWidth="1.800" /></Svg>
        <span className="flex h-4 w-[5px] justify-center bg-[#a0a0a0]"><span className="mt-1 h-2 w-px bg-[#444]" /></span>
      </div>

      <div className="flex h-[24px] items-stretch border-b border-[#ababab]">
        <div className="ml-3 flex items-center gap-3 text-[#a8a8a8]">
          <button aria-label="First sheet"><Svg w={10} h={12} vb="0 0 10 12"><path d="M1 1v10" stroke="currentColor" /><path d="M9 1v10L3 6z" fill="currentColor" /></Svg></button>
          <button aria-label="Previous sheet"><Svg w={10} h={12} vb="0 0 10 12"><path d="M8 1v10L2 6z" fill="currentColor" /></Svg></button>
          <button aria-label="Next sheet"><Svg w={10} h={12} vb="0 0 10 12"><path d="M2 1v10l6-5z" fill="currentColor" /></Svg></button>
          <button aria-label="Last sheet"><Svg w={10} h={12} vb="0 0 10 12"><path d="M9 1v10" stroke="currentColor" /><path d="M1 1v10l6-5z" fill="currentColor" /></Svg></button>
        </div>
        <button aria-label="Add sheet" className="ml-[15px] mr-[11px]"><Svg w={14} vb="0 0 14 14"><path d="M7 1v12M1 7h12" stroke="#000" strokeWidth="2.800" /></Svg></button>
        <button className="w-[50px] border-b-[3px] border-[#666] bg-white font-bold">JIRA</button>
        <button className="ml-[12px]">Work Sheet</button>
        <Sep className="my-auto ml-[12px] h-3" />
      </div>

      <div className="flex h-[38px] items-center border-b border-[#a0a0a0] pl-3">
        <button aria-label="Close find bar"><Svg w={18} vb="0 0 18 18"><circle cx="9" cy="9" r="8.500" fill="#f77a80" stroke="#dd4b52" /><path d="m5.500 5.500 7 7M12.500 5.500l-7 7" stroke="#fff" strokeWidth="2.200" /></Svg></button>
        <div className="ml-[7px] flex h-6 w-[250px] border border-[#7a7a7a] bg-white">
          <input aria-label="Find" placeholder="Find" className="min-w-0 flex-1 pl-[2px] placeholder-[#888] outline-none" />
          <button aria-label="Find history" className="flex w-[17px] items-center justify-center border-l border-[#a0a0a0] bg-[#e8e8e8]"><Chevron /></button>
        </div>
        <button aria-label="Find previous" className="ml-[7px]"><Svg w={20} h={12} vb="0 0 20 12"><path d="M1 11h18L10 1z" stroke="#a8a8a8" /></Svg></button>
        <button aria-label="Find next" className="ml-[13px]"><Svg w={20} h={12} vb="0 0 20 12"><path d="M1 1h18l-9 10z" stroke="#a8a8a8" /></Svg></button>
        <button className="ml-[10px] w-[48px] whitespace-nowrap text-left text-[11px] text-[#999]">Find All</button>
        <label className="flex w-[115px] items-center gap-1 whitespace-nowrap text-[11px]">
          <input type="checkbox" className="size-[13px] appearance-none border border-[#333] bg-white" />
          Formatted Display
        </label>
        <label className="flex items-center gap-1 whitespace-nowrap text-[11px]">
          <input type="checkbox" className="size-[13px] appearance-none border border-[#333] bg-white" />
          Match Case
        </label>
        <Sep className="ml-2" />
        <button aria-label="Find and replace" className="mx-[9px]"><Svg w={22}>{IC.find}</Svg></button>
        <Sep />
      </div>

      <div className="flex h-[22px] items-center">
        <span className="w-[278px] pl-[11px]">Sheet 1 of 2</span>
        <Sep />
        <span className="w-[354px]" />
        <Sep />
        <span className="w-[254px] pl-[9px]">Default</span>
        <Sep />
        <span className="w-[290px] text-center">English (India)</span>
        <Sep />
        <span className="w-[68px]" />
        <Sep />
        <span className="flex w-7 justify-center"><Svg w={16} h={12} vb="0 0 16 12"><path d="M.5 2.500h9v7h-9z" stroke={B} /><path d="M13 1v10M11 .5h4M11 11.500h4" stroke={D} /></Svg></span>
        <Sep />
        <span className="flex w-[30px] justify-center"><Svg w={11} vb="0 0 11 11"><path d="M1 1h9v9H1zM3 1v3h5V1M3.500 10V6.500h4V10" stroke="#c9211e" strokeWidth="1.400" /></Svg></span>
        <Sep />
        <span className="w-[28px]" />
        <Sep />
        <span className="flex-1 text-center">Average: ; Sum: 0</span>
        <Sep />
        <button aria-label="Zoom out" className="ml-[9px]"><Svg w={11} vb="0 0 11 11"><path d="M0 5.500h11" stroke={D} strokeWidth="2" /></Svg></button>
        <input
          type="range"
          aria-label="Zoom"
          className="ml-1 h-3 w-[98px] appearance-none bg-[linear-gradient(#777,#777)] bg-[length:100%_2px] bg-center bg-no-repeat [&::-webkit-slider-thumb]:h-[10px] [&::-webkit-slider-thumb]:w-1 [&::-webkit-slider-thumb]:appearance-none [&::-webkit-slider-thumb]:border [&::-webkit-slider-thumb]:border-[#555] [&::-webkit-slider-thumb]:bg-[#ddd]"
        />
        <button aria-label="Zoom in" className="ml-[5px]"><Svg w={11} vb="0 0 11 11"><path d="M0 5.500h11M5.500 0v11" stroke={D} strokeWidth="2" /></Svg></button>
        <Sep className="ml-[6px]" />
        <span className="w-[45px] pl-2">100%</span>
      </div>
    </section>
  );
}

function RightTaskbar() {
  return (
    <footer className="flex h-10 items-center bg-[#1d1e1c] pr-[14px] text-white">
      <button aria-label="Start" className="flex h-10 w-12 items-center justify-center"><StartIcon /></button>
      <button aria-label="Search" className="flex h-10 w-12 items-center justify-center"><Magnifier size={21} flip color="#fff" /></button>
      <button aria-label="Task view" className="flex h-10 w-[51px] items-center justify-center"><TaskViewIcon /></button>
      <AppButtons />
      <div className="ml-auto"><Clock /></div>
    </footer>
  );
}

export default function App() {
  return (
    <div className={"flex h-screen w-full overflow-hidden bg-[#1e1f24] " + UI}>
      <div className="flex min-w-0 flex-1 flex-col">
        <ValerusWindow />
        <LeftTaskbar />
      </div>
      <div className="flex min-w-0 flex-1 flex-col">
        <CalcWindow />
        <RightTaskbar />
      </div>
    </div>
  );
}
